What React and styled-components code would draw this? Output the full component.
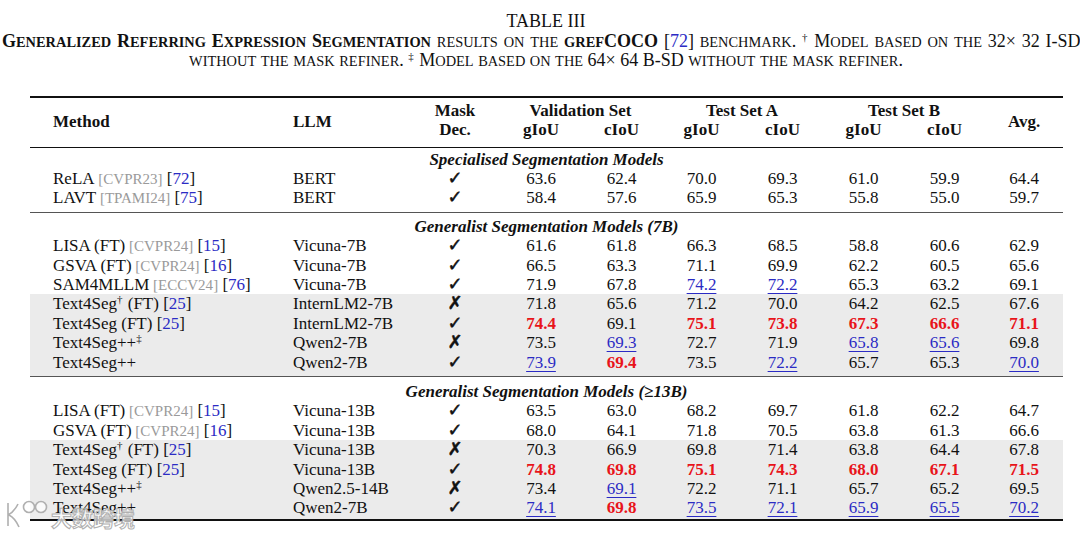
import React from "react";
import styled, { createGlobalStyle } from "styled-components";

const sections = [
  {
    title: "Specialised Segmentation Models",
    rows: [
      { name: "ReLA", venue: "CVPR23", cite: "72", llm: "BERT", mask: true, vals: ["63.6", "62.4", "70.0", "69.3", "61.0", "59.9", "64.4"] },
      { name: "LAVT", venue: "TPAMI24", cite: "75", llm: "BERT", mask: true, vals: ["58.4", "57.6", "65.9", "65.3", "55.8", "55.0", "59.7"] },
    ],
  },
  {
    title: "Generalist Segmentation Models (7B)",
    rows: [
      { name: "LISA (FT)", venue: "CVPR24", cite: "15", llm: "Vicuna-7B", mask: true, vals: ["61.6", "61.8", "66.3", "68.5", "58.8", "60.6", "62.9"] },
      { name: "GSVA (FT)", venue: "CVPR24", cite: "16", llm: "Vicuna-7B", mask: true, vals: ["66.5", "63.3", "71.1", "69.9", "62.2", "60.5", "65.6"] },
      { name: "SAM4MLLM", venue: "ECCV24", cite: "76", llm: "Vicuna-7B", mask: true, vals: ["71.9", "67.8", "74.2u", "72.2u", "65.3", "63.2", "69.1"] },
      { name: "Text4Seg", sup: "†", tail: " (FT)", cite: "25", llm: "InternLM2-7B", mask: false, shade: true, vals: ["71.8", "65.6", "71.2", "70.0", "64.2", "62.5", "67.6"] },
      { name: "Text4Seg (FT)", cite: "25", llm: "InternLM2-7B", mask: true, shade: true, vals: ["74.4r", "69.1", "75.1r", "73.8r", "67.3r", "66.6r", "71.1r"] },
      { name: "Text4Seg++", sup: "‡", llm: "Qwen2-7B", mask: false, shade: true, vals: ["73.5", "69.3u", "72.7", "71.9", "65.8u", "65.6u", "69.8"] },
      { name: "Text4Seg++", llm: "Qwen2-7B", mask: true, shade: true, vals: ["73.9u", "69.4r", "73.5", "72.2u", "65.7", "65.3", "70.0u"] },
    ],
  },
  {
    title: "Generalist Segmentation Models (≥13B)",
    rows: [
      { name: "LISA (FT)", venue: "CVPR24", cite: "15", llm: "Vicuna-13B", mask: true, vals: ["63.5", "63.0", "68.2", "69.7", "61.8", "62.2", "64.7"] },
      { name: "GSVA (FT)", venue: "CVPR24", cite: "16", llm: "Vicuna-13B", mask: true, vals: ["68.0", "64.1", "71.8", "70.5", "63.8", "61.3", "66.6"] },
      { name: "Text4Seg", sup: "†", tail: " (FT)", cite: "25", llm: "Vicuna-13B", mask: false, shade: true, vals: ["70.3", "66.9", "69.8", "71.4", "63.8", "64.4", "67.8"] },
      { name: "Text4Seg (FT)", cite: "25", llm: "Vicuna-13B", mask: true, shade: true, vals: ["74.8r", "69.8r", "75.1r", "74.3r", "68.0r", "67.1r", "71.5r"] },
      { name: "Text4Seg++", sup: "‡", llm: "Qwen2.5-14B", mask: false, shade: true, vals: ["73.4", "69.1u", "72.2", "71.1", "65.7", "65.2", "69.5"] },
      { name: "Text4Seg++", llm: "Qwen2-7B", mask: true, shade: true, vals: ["74.1u", "69.8r", "73.5u", "72.1u", "65.9u", "65.5u", "70.2u"] },
    ],
  },
];

const colWidths = [250, 130, 90, 82, 79, 81, 81, 81, 81, 78];
const titlePad = [2, 4, 5];

// small caps the way LaTeX sets them: lower case drawn as smaller capitals
const sc = (text) =>
  text.split(/([a-z]+)/).map((part, i) =>
    /^[a-z]+$/.test(part) ? <Low key={i}>{part}</Low> : part
  );

const App = () => {
  return (
    <>
      <GlobalStyle />
      <Page>
        <Caption>
          <CapLine $align="center">TABLE III</CapLine>
          <CapLine $align="left" $ws={1.3}>
            <b>{sc("Generalized Referring Expression Segmentation")}</b>
            {sc(" results on the ")}
            <b>
              {sc("gref")}COCO
            </b>{" "}
            [<Ref>72</Ref>] {sc("benchmark. ")}
            <Sup>†</Sup> {sc("Model based on the 32× 32 I-SD")}
          </CapLine>
          <CapLine $align="center">
            {sc("without the mask refiner. ")}
            <Sup>‡</Sup> {sc("Model based on the 64× 64 B-SD without the mask refiner.")}
          </CapLine>
        </Caption>

        <Table>
          <colgroup>
            {colWidths.map((w, i) => (
              <col key={i} style={{ width: w }} />
            ))}
          </colgroup>
          <thead>
            <HeadRow $top>
              <Th rowSpan={2} $left $pl={23}>Method</Th>
              <Th rowSpan={2} $left $pl={13}>LLM</Th>
              <Th $first>Mask</Th>
              <Th colSpan={2} $first>Validation Set</Th>
              <Th colSpan={2} $first>Test Set A</Th>
              <Th colSpan={2} $first>Test Set B</Th>
              <Th rowSpan={2}>Avg.</Th>
            </HeadRow>
            <HeadRow>
              <Th $last>Dec.</Th>
              <Th $last>gIoU</Th>
              <Th $last>cIoU</Th>
              <Th $last>gIoU</Th>
              <Th $last>cIoU</Th>
              <Th $last>gIoU</Th>
              <Th $last>cIoU</Th>
            </HeadRow>
          </thead>
          {sections.map((sec, si) => (
            <Body key={si} $first={si === 0}>
              <tr>
                <SectionTitle colSpan={10} $pt={titlePad[si]}>
                  {sec.title}
                </SectionTitle>
              </tr>
              {sec.rows.map((r, ri) => (
                <DataRow
                  key={ri}
                  r={r}
                  pb={ri === sec.rows.length - 1 ? (si === sections.length - 1 ? 1 : 4) : 0}
                />
              ))}
            </Body>
          ))}
        </Table>

        <Watermark>
          <svg width="46" height="30" viewBox="0 0 46 30">
            <g fill="rgba(255,255,255,0.75)" stroke="#b0b0b0" strokeWidth="1.6">
              <path d="M6 4 V27 M6 16 Q12 13 16 5 M7 16 Q13 19 17 28" fill="none" />
              <circle cx="27" cy="8" r="5.5" />
              <circle cx="39" cy="8" r="5.5" />
            </g>
          </svg>
          <WmText>大数跨境</WmText>
        </Watermark>
      </Page>
    </>
  );
};

const DataRow = ({ r, pb }) => (
  <Row $shade={r.shade}>
    <Td $left $pl={23} $pb={pb}>
      {r.name}
      {r.sup && <Sup>{r.sup}</Sup>}
      {r.tail}
      {r.venue && <Venue> [{r.venue}]</Venue>}
      {r.cite && (
        <>
          {" "}[<Ref>{r.cite}</Ref>]
        </>
      )}
    </Td>
    <Td $left $pl={13} $pb={pb}>
      {r.llm}
    </Td>
    <Td $pb={pb}>
      <Mark>{r.mask ? "✓" : "✗"}</Mark>
    </Td>
    {r.vals.map((v, i) => {
      const kind = v.slice(-1);
      const num = v.replace(/[ru]$/, "");
      return (
        <Td key={i} $pb={pb}>
          {kind === "r" ? <Best>{num}</Best> : kind === "u" ? <Second>{num}</Second> : num}
        </Td>
      );
    })}
  </Row>
);

const GlobalStyle = createGlobalStyle`
  html, body {
    margin: 0;
    padding: 0;
    background: #fff;
    overflow: hidden;
  }
  body {
    font-family: "Liberation Serif", "Times New Roman", serif;
    color: #111;
  }
`;

const Page = styled.div`
  position: relative;
  width: 1080px;
  height: 536px;
  overflow: hidden;
`;

const Caption = styled.div`
  width: 1088px;
  margin-left: 2px;
  padding-top: 12px;
  font-size: 18px;
  line-height: 19.5px;
`;

const CapLine = styled.div`
  text-align: ${(p) => p.$align};
  word-spacing: ${(p) => p.$ws || 0}px;
  white-space: nowrap;
  b {
    font-weight: bold;
  }
`;

const Low = styled.span`
  font-size: 0.8em;
  line-height: 1;
  text-transform: uppercase;
`;

const Ref = styled.span`
  color: #2b2bc4;
`;

const Sup = styled.sup`
  font-size: 11px;
  line-height: 0;
  vertical-align: 6px;
  margin-right: 1px;
`;

const Table = styled.table`
  margin: 25px 0 0 30px;
  width: 1033px;
  border-collapse: collapse;
  table-layout: fixed;
  font-size: 17px;
`;

const HeadRow = styled.tr`
  border-top: ${(p) => (p.$top ? "2px solid #111" : "none")};
`;

const Th = styled.th`
  padding: ${(p) => (p.$first ? "3px" : "0")} 0 ${(p) => (p.$last ? "7px" : "0")}
    ${(p) => p.$pl || 0}px;
  text-align: ${(p) => (p.$left ? "left" : "center")};
  vertical-align: middle;
  font-weight: bold;
  line-height: 19.5px;
  white-space: nowrap;
`;

const Body = styled.tbody`
  border-top: ${(p) => (p.$first ? "1.5px solid #111" : "1px solid #555")};
  &:last-child {
    border-bottom: 2.5px solid #111;
  }
`;

const SectionTitle = styled.td`
  padding: ${(p) => p.$pt}px 0 0;
  text-align: center;
  font-weight: bold;
  font-style: italic;
  line-height: 19.4px;
`;

const Row = styled.tr`
  background: ${(p) => (p.$shade ? "#ebebeb" : "transparent")};
`;

const Td = styled.td`
  padding: 0 0 ${(p) => p.$pb || 0}px ${(p) => p.$pl || 0}px;
  text-align: ${(p) => (p.$left ? "left" : "center")};
  line-height: 19.4px;
  white-space: nowrap;
  vertical-align: top;
`;

const Venue = styled.span`
  font-size: 15px;
  line-height: 1;
  color: #9a9a9a;
`;

const Mark = styled.span`
  font-family: "DejaVu Sans", sans-serif;
  font-size: 18px;
  line-height: 1;
  font-style: italic;
  color: #111;
  -webkit-text-stroke: 0.5px #111;
`;

const Best = styled.span`
  color: #e8141a;
  font-weight: bold;
  line-height: 1;
`;

const Second = styled.span`
  color: #2b2bc4;
  line-height: 1;
  text-decoration: underline;
  text-underline-offset: 3px;
  text-decoration-thickness: 1px;
`;

const Watermark = styled.div`
  position: absolute;
  left: 2px;
  top: 499px;
  display: flex;
  align-items: center;
  gap: 3px;
`;

const WmText = styled.span`
  font-family: "Noto Sans CJK SC", sans-serif;
  font-size: 21px;
  font-weight: bold;
  line-height: 1;
  margin-top: 6px;
  color: rgba(255, 255, 255, 0.75);
  -webkit-text-stroke: 1px #b0b0b0;
`;

export default App;
